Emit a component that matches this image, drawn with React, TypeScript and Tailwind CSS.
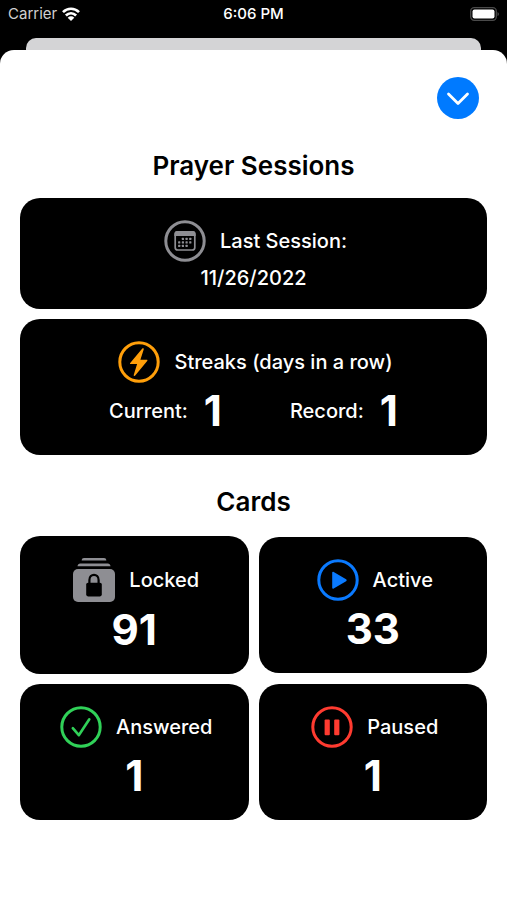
import React from "react";

type CardProps = {
    children: React.ReactNode;
    className?: string;
}

function Card({children, className = ""}: CardProps) {
    return (
        <div className={`flex flex-col items-center rounded-[20px] bg-black pt-[22px] text-white ${className}`}>
            {children}
        </div>
    )
}

type LabelProps = {
    icon: React.ReactNode;
    text: string;
}

function Label({icon, text}: LabelProps) {
    return (
        <div className="flex items-center gap-[14px] pl-1">
            {icon}
            <h3 className="text-xl font-medium">{text}</h3>
        </div>
    )
}

type RingProps = {
    className: string;
    children: React.ReactNode;
}

function Ring({className, children}: RingProps) {
    return (
        <svg viewBox="0 0 42 42" className={`size-[42px] ${className}`} fill="currentColor" aria-hidden="true">
            <circle cx="21" cy="21" r="19.2" fill="none" stroke="currentColor" strokeWidth="3"/>
            {children}
        </svg>
    )
}

function CalendarIcon() {
    const dots = [
        [18.9, 18.9], [22.6, 18.9], [26.3, 18.9],
        [15.2, 22.4], [18.9, 22.4], [22.6, 22.4], [26.3, 22.4],
        [15.2, 25.9], [18.9, 25.9], [22.6, 25.9],
    ];

    return (
        <Ring className="text-[#8e8e93]">
            <rect x="11.2" y="11.8" width="19.600" height="18.200" rx="2.600" fill="none" stroke="currentColor" strokeWidth="1.700"/>
            <path d="M10.400 16V14a3 3 0 0 1 3-3h15.200a3 3 0 0 1 3 3v2z"/>
            {dots.map(([x, y]) => (
                <rect key={`${x}-${y}`} x={x - 1.1} y={y - 1.1} width="2.200" height="2.200" rx="0.500"/>
            ))}
        </Ring>
    )
}

function BoltIcon() {
    return (
        <Ring className="text-[#ff9f0a]">
            <path d="M24.300 7.600 12.200 22c-.5.600-.2 1.100.4 1.100h6.500L15.800 33.700c-.4 1.200.7 1.700 1.400.8L29.200 20c.5-.6.2-1.200-.4-1.200h-6.400L25.700 8.400c.4-1.200-.7-1.700-1.400-.8z"/>
        </Ring>
    )
}

function PlayIcon() {
    return (
        <Ring className="text-[#0a7aff]">
            <path d="M15.2 13.6v15.2c0 .9.7 1.2 1.5.8l12.4-7.3c.8-.5.8-1.5 0-2l-12.4-7.4c-.8-.4-1.5-.1-1.5.7z"/>
        </Ring>
    )
}

function CheckIcon() {
    return (
        <Ring className="text-[#30d158]">
            <path d="m12.8 22.2 6 7L29.3 13.3" fill="none" stroke="currentColor" strokeWidth="2.6"
                  strokeLinecap="round" strokeLinejoin="round"/>
        </Ring>
    )
}

function PauseIcon() {
    return (
        <Ring className="text-[#ff3b30]">
            <rect x="13.6" y="13.4" width="5.2" height="15.8" rx="1"/>
            <rect x="23.2" y="13.4" width="5.2" height="15.8" rx="1"/>
        </Ring>
    )
}

function LockedIcon() {
    return (
        <svg viewBox="0 0 42 44" className="h-[44px] w-[42px] text-[#8e8e93]" fill="currentColor" aria-hidden="true">
            <path d="M8.600 2.500C8.800.800 9.600 0 11 0h20c1.400 0 2.200.8 2.400 2.500z"/>
            <path d="M4.500 8.300c.2-1.900 1.200-2.800 2.800-2.800h27.400c1.600 0 2.600.9 2.800 2.800z"/>
            <rect y="11" width="42" height="33" rx="5"/>
            <rect x="13.200" y="24.800" width="15.600" height="13.600" rx="1.800" fill="#000"/>
            <path d="M16.400 25.500v-3.500c0-6.900 9.200-6.900 9.200 0v3.500" fill="none" stroke="#000" strokeWidth="2.200"/>
        </svg>
    )
}

const stats = [
    {text: "Locked", value: 91, icon: <LockedIcon/>},
    {text: "Active", value: 33, icon: <PlayIcon/>},
    {text: "Answered", value: 1, icon: <CheckIcon/>},
    {text: "Paused", value: 1, icon: <PauseIcon/>},
];

function StatusBar() {
    return (
        <header className="grid grid-cols-3 items-center px-2 pt-1 text-[15px] leading-5 text-white">
            <div className="flex items-center gap-[5px] text-[#d0d0d0]">
                <span>Carrier</span>
                <svg viewBox="0 0 18 14" className="h-[14px] w-[18px] text-white" fill="none" stroke="currentColor"
                     strokeWidth="2.7" aria-hidden="true">
                    <path d="M1 5.100c4.600-4.500 11.400-4.500 16 0"/>
                    <path d="M3.900 8.500c3-2.900 7.200-2.900 10.200 0"/>
                    <path d="M9 13.900 5.700 10.700c1.900-1.800 4.700-1.800 6.600 0z" fill="currentColor" stroke="none"/>
                </svg>
            </div>
            <span className="text-center font-medium">6:06 PM</span>
            <svg viewBox="0 0 30 14" className="h-[14px] w-[30px] justify-self-end" aria-hidden="true">
                <rect x="1.700" y="0.700" width="25.600" height="12.600" rx="3.500" fill="none" stroke="#4a4a4a" strokeWidth="1.300"/>
                <rect x="3.500" y="2.500" width="22" height="9" rx="2" fill="#fff"/>
                <path d="M28.500 4.900c1.900.8 1.900 3.400 0 4.200z" fill="#4a4a4a"/>
            </svg>
        </header>
    )
}

export default function App() {
    return (
        <div className="flex min-h-screen flex-col bg-black font-['Inter',sans-serif]">
            <StatusBar/>

            {/* Edge of the screen behind the sheet */}
            <div className="mx-[26px] mt-[14px] h-3 rounded-t-[10px] bg-[#d4d4d6]"></div>

            <main className="flex grow flex-col rounded-t-[14px] bg-white px-5 pt-[27px] pb-20 text-black">
                <button type="button" aria-label="Close"
                        className="mr-2 flex size-[42px] items-center justify-center self-end rounded-full bg-[#007aff]">
                    <svg viewBox="0 0 24 24" className="size-6" fill="none" stroke="#fff" strokeWidth="2.8"
                         strokeLinecap="round" strokeLinejoin="round" aria-hidden="true">
                        <path d="m2.500 8 9.500 9.500L21.500 8"/>
                    </svg>
                </button>

                {/* Sessions */}
                <section className="mt-[29px] flex flex-col gap-[10px]">
                    <h2 className="mb-1 text-center text-[26px] leading-9 font-semibold">Prayer Sessions</h2>
                    <Card className="pb-[15px]">
                        <Label icon={<CalendarIcon/>} text="Last Session:"/>
                        <p className="text-xl leading-8 font-medium">11/26/2022</p>
                    </Card>
                    <Card className="pb-4">
                        <Label icon={<BoltIcon/>} text="Streaks (days in a row)"/>
                        <dl className="flex gap-[68px]">
                            <div className="flex items-center gap-4">
                                <dt className="text-xl font-medium">Current:</dt>
                                <dd className="text-[42px] leading-[56px] font-bold">1</dd>
                            </div>
                            <div className="flex items-center gap-4">
                                <dt className="text-xl font-medium">Record:</dt>
                                <dd className="text-[42px] leading-[56px] font-bold">1</dd>
                            </div>
                        </dl>
                    </Card>
                </section>

                {/* Cards */}
                <section className="mt-[29px]">
                    <h2 className="mb-4 text-center text-[26px] leading-9 font-semibold">Cards</h2>
                    <div className="grid grid-cols-2 items-center gap-[10px]">
                        {stats.map((stat) => (
                            <Card key={stat.text} className="pb-4">
                                <Label icon={stat.icon} text={stat.text}/>
                                <p className="text-[42px] leading-[56px] font-bold">{stat.value}</p>
                            </Card>
                        ))}
                    </div>
                </section>
            </main>
        </div>
    )
}
